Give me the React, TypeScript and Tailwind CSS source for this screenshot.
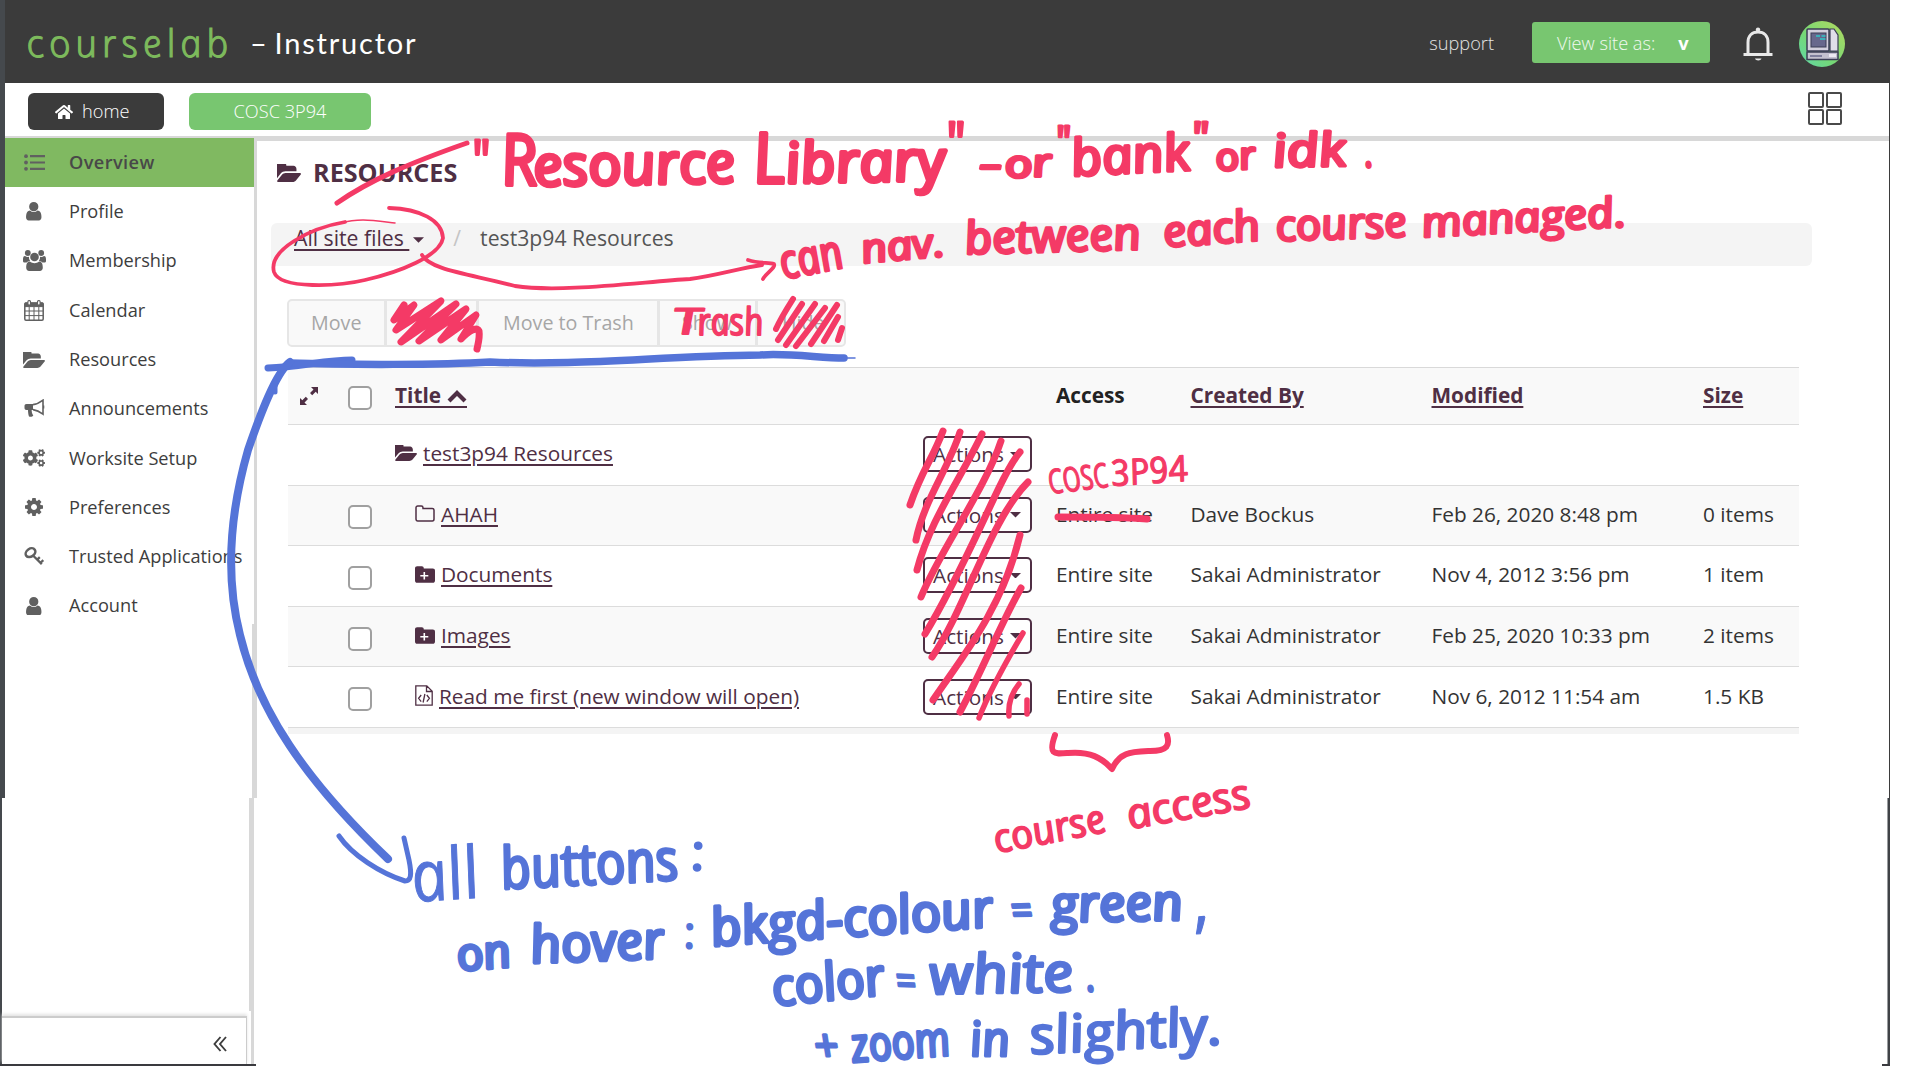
import React from "react";
import { FaCogs, FaHome } from "react-icons/fa";

const USER =
  "M1536 1399q0 109-62.5 187t-150.5 78h-854q-88 0-150.5-78t-62.5-187q0-85 8.5-160.5t31.5-152 58.5-131 94-89 134.5-34.5q131 128 313 128t313-128q76 0 134.5 34.5t94 89 58.5 131 31.5 152 8.5 160.5zm-256-887q0 159-112.5 271.5t-271.5 112.5-271.5-112.5-112.5-271.5 112.5-271.5 271.5-112.5 271.5 112.5 112.5 271.5z";
const FOLDER_OPEN =
  "M1815 952q0 31-31 66l-336 396q-43 51-120.5 86.5t-143.5 35.5h-1088q-34 0-60.5-13t-26.5-43q0-31 31-66l336-396q43-51 120.5-86.5t143.5-35.5h1088q34 0 60.5 13t26.5 43zm-343-344v160h-832q-94 0-197 47.5t-164 119.5l-337 396-5 6q0-4-.5-12.5t-.5-12.5v-960q0-92 66-158t158-66h320q92 0 158 66t66 158v32h544q92 0 158 66t66 158z";
const COG =
  "M1152 896q0-106-75-181t-181-75-181 75-75 181 75 181 181 75 181-75 75-181zm512-109v222q0 12-8 23t-20 13l-185 28q-19 54-39 91 35 50 107 138 10 12 10 25t-9 23q-27 37-99 108t-94 71q-12 0-26-9l-138-108q-44 23-91 38-16 136-29 186-7 28-36 28h-222q-14 0-24.5-8.5t-11.5-21.5l-28-184q-49-16-90-37l-141 107q-10 9-25 9-14 0-25-11-126-114-165-168-7-10-7-23 0-12 8-23 15-21 51-66.5t54-70.5q-27-50-41-99l-183-27q-13-2-21-12.5t-8-23.5v-222q0-12 8-23t19-13l186-28q14-46 39-92-40-57-107-138-10-12-10-24 0-10 9-23 26-36 98.5-107.5t94.5-71.5q13 0 26 10l138 107q44-23 91-38 16-136 29-186 7-28 36-28h222q14 0 24.5 8.5t11.5 21.5l28 184q49 16 90 37l142-107q9-9 24-9 13 0 25 10 129 119 165 170 7 8 7 22 0 12-8 23-15 21-51 66.5t-54 70.5q26 50 41 98l183 28q13 2 21 12.5t8 23.5z";

const UserIcon = () => (
  <svg viewBox="256 128 1280 1536" className="h-[18.5px] w-[15.5px]" fill="currentColor"><path d={USER} /></svg>
);
const UsersIcon = () => (
  <svg viewBox="0 0 23 21" className="h-[21px] w-[23px]" fill="currentColor">
    <circle cx="4.800" cy="3" r="2.900" /><circle cx="18.200" cy="3" r="2.900" />
    <path d="M0 11V9.300C0 7.200.6 6 2 6c.8.6 1.800.9 2.800.9l1.200-.2C5.800 8.200 6.300 9.600 7.200 11c-1.400 0-2.600.5-3.500 1.500H1.800C.7 12.500 0 12 0 11zM23 11V9.300C23 7.200 22.400 6 21 6c-.8.6-1.800.9-2.800.9l-1.200-.2c.2 1.500-.3 2.900-1.200 4.300 1.400 0 2.600.5 3.500 1.500h1.900c1.100 0 1.800-.5 1.800-1.500z" />
    <circle cx="11.500" cy="7" r="4.300" />
    <path d="M3.200 17.800c0-4 1-6.300 3.700-6.300 1.400 1.200 2.900 1.700 4.600 1.700s3.200-.5 4.600-1.700c2.700 0 3.700 2.300 3.700 6.300 0 2-1.200 3.100-3 3.100H6.200c-1.800 0-3-1.100-3-3.100z" />
  </svg>
);
const FolderOpen = ({ className }: { className: string }) => (
  <svg viewBox="0 256 1815 1280" preserveAspectRatio="none" className={className} fill="currentColor"><path d={FOLDER_OPEN} /></svg>
);
const CogIcon = () => (
  <svg viewBox="128 128 1536 1536" className="size-[18px]" fill="currentColor"><path d={COG} /></svg>
);
const ListIcon = () => (
  <svg viewBox="0 0 21 17" className="h-[17px] w-[21px]" fill="currentColor">
    <circle cx="2" cy="2.2" r="1.9" /><circle cx="2" cy="8.5" r="1.9" /><circle cx="2" cy="14.8" r="1.9" />
    <path d="M6 1h15v2.2H6zM6 7.4h15v2.2H6zM6 13.8h15V16H6z" />
  </svg>
);
const CalendarIcon = () => (
  <svg viewBox="0 0 20 21" className="h-[21px] w-5" fill="none" stroke="currentColor">
    <rect x="0.8" y="3" width="18.4" height="17.2" rx="1.2" strokeWidth="1.5" />
    <path d="M1 3h18v3.6H1z" fill="currentColor" />
    <path d="M5.2 7v13M10 7v13M14.8 7v13M1 11h18M1 15.6h18" strokeWidth="1" />
    <rect x="3.9" y="0.6" width="2.6" height="4.4" rx="1" fill="#fff" strokeWidth="1.1" />
    <rect x="13.5" y="0.6" width="2.6" height="4.4" rx="1" fill="#fff" strokeWidth="1.1" />
  </svg>
);
const HornIcon = () => (
  <svg viewBox="0 0 21 19" className="h-[19px] w-[21px]" fill="none" stroke="currentColor">
    <path d="M2.5 5h6.5v6H7.6c.3 2 .2 3.500 1.700 5.400-.8 1.500-3 1.600-4.300 1C4.300 15.500 4 13 4 11H2.500C1.200 11 .5 10.300.5 9V7c0-1.300.7-2 2-2z" fill="currentColor" stroke="none" />
    <path d="M9 5.600c4-.4 7-2.200 10-4.500v14c-3-2.300-6-4-10-4.500M19.500 6.500v3" strokeWidth="1.600" />
  </svg>
);
const KeyIcon = () => (
  <svg viewBox="0 0 21 19" className="h-[19px] w-[21px]" fill="none" stroke="currentColor">
    <ellipse cx="6.500" cy="5.700" rx="5.200" ry="3.900" transform="rotate(-35 6.500 5.700)" strokeWidth="2.500" />
    <path d="M9 8.500l8.800 8.600M13 12.800l2.800-2.700M16.300 16l3-2.900" strokeWidth="2.300" />
  </svg>
);
const Caret = ({ className }: { className: string }) => (
  <svg viewBox="0 0 12 6" className={className} fill="currentColor"><path d="M0 0h12L6 6z" /></svg>
);
const FolderIcon = () => (
  <svg viewBox="0 0 20 17" className="h-[17px] w-5 shrink-0" fill="none" stroke="currentColor" strokeWidth="1.500">
    <path d="M1 14V2.800C1 1.600 1.800 1 2.700 1h3.600c1 0 1.700.6 1.700 1.700V3.600h9.300c1 0 1.700.7 1.700 1.700V14c0 1.200-.8 2-1.700 2H2.700C1.700 16 1 15.200 1 14z" />
  </svg>
);
const FolderPlus = () => (
  <svg viewBox="0 0 20 17" className="h-[17px] w-5 shrink-0">
    <path d="M0 14.500V2.500C0 1 .9.200 2.200.2h4.600C8 .2 8.800 1 8.800 2.500h9C19.200 2.500 20 3.400 20 4.700v9.800c0 1.400-.9 2.300-2.200 2.300H2.200C.9 16.800 0 16 0 14.500z" fill="currentColor" />
    <path d="M9.300 6v7.600M5.300 9.800h8" stroke="#fff" strokeWidth="1.600" />
  </svg>
);
const CodeFile = () => (
  <svg viewBox="0 0 18 21" className="h-[21px] w-[18px] shrink-0" fill="none" stroke="currentColor" strokeWidth="1.300">
    <path d="M.8.800h11l5.400 5.500v13.900H.8zM11.500.800v5.700h5.700M6.200 10l-2.600 3.300 2.600 3.300M11.800 10l2.600 3.300-2.600 3.300M9.900 9l-1.800 8.500" />
  </svg>
);

const nav: [React.ReactNode, string][] = [
  [<ListIcon />, "Overview"],
  [<UserIcon />, "Profile"],
  [<UsersIcon />, "Membership"],
  [<CalendarIcon />, "Calendar"],
  [<FolderOpen className="h-4 w-[22px]" />, "Resources"],
  [<HornIcon />, "Announcements"],
  [<FaCogs className="size-[22px]" />, "Worksite Setup"],
  [<CogIcon />, "Preferences"],
  [<KeyIcon />, "Trusted Applications"],
  [<UserIcon />, "Account"],
];

function TopBar() {
  return (
    <header className="flex h-[83px] items-center bg-[#3b3b3b] pt-px pr-[44px] pl-[22px]">
      <h1 className="flex items-baseline font-['Open_Sans'] font-light">
        <span className="mt-[3px] ml-[4px] block w-[219px] origin-bottom-left skew-x-12 text-[38px] leading-[50px] tracking-[5.100px] text-[#7dba5c] italic [-webkit-text-stroke:1.200px_#7dba5c]">courselab</span>
        <span className="-translate-y-[3px] font-['Lato'] text-[29px] leading-[50px] font-normal tracking-[1.700px] text-white">–</span>
        <span className="-translate-y-[3px] pl-[6px] font-['Lato'] text-[29px] leading-[50px] font-normal tracking-[1.800px] text-white">Instructor</span>
      </h1>
      <span className="mt-[4px] ml-auto text-[18.2px] font-light text-[#e4e4e4]">support</span>
      <button className="mt-px ml-[38px] flex h-[41px] w-[178px] items-center rounded-[3px] bg-[#78c670] pt-[3px] pl-[25px] text-[18.2px] font-light text-white/90">
        View site as:<b className="ml-[23px] font-bold text-white">v</b>
      </button>
      <svg viewBox="0 0 30 35" className="mt-1 ml-[33px] h-[35px] w-[30px]" fill="none" stroke="#e8e8e8" strokeWidth="3">
        <path d="M5 27.500V15.500C5 9 9 5 15 5s10 4 10 10.500v12M15 5V2" />
        <path d="M.5 27.500h29" strokeWidth="3" /><path d="M12 31.500h6.500c-.5 2.600-6 2.600-6.500 0z" fill="#e8e8e8" stroke="none" /><circle cx="15" cy="2.600" r="2.200" fill="#e8e8e8" stroke="none" />
      </svg>
      <svg viewBox="0 0 46 46" className="mt-1 ml-[26px] size-[46px]">
        <defs><linearGradient id="av" x1="1" y1="0" x2="0" y2="1"><stop offset="0" stopColor="#b4da5f" /><stop offset=".6" stopColor="#74d877" /><stop offset="1" stopColor="#5fd6ac" /></linearGradient></defs>
        <circle cx="23" cy="23" r="23" fill="url(#av)" />
        <path d="M31 8h4l4 6v16h-8z" fill="#e0deea" stroke="#3b3d55" strokeWidth="1.200" />
        <rect x="8" y="8" width="22" height="22" rx="1" fill="#d2d0dd" stroke="#3b3d55" strokeWidth="1.500" />
        <rect x="12" y="12" width="15" height="14" fill="#67688c" stroke="#3b3d55" />
        <path d="M17 15h4M22.500 15h4M21 18h5.500" stroke="#2fc6c8" strokeWidth="1.500" />
        <rect x="8" y="31" width="31" height="7.500" fill="#c3c1cf" stroke="#3b3d55" strokeWidth="1.500" />
        <path d="M11 35h12" stroke="#67688c" strokeWidth="1.500" /><path d="M30 33h7v3h-7z" fill="#eceaf2" />
      </svg>
    </header>
  );
}

function SiteBar() {
  return (
    <nav className="flex h-[58px] items-center border-b-[5px] border-[#d8d8d8] bg-white pt-[4px] pr-[47px] pl-[23px] text-[18.2px] font-light text-white">
      <a className="flex h-[37px] w-[136px] items-center rounded-[6px] bg-[#3b3b3b] pl-[27px]"><FaHome className="mr-[9px] size-[18px]" />home</a>
      <a className="ml-[25px] flex h-[37px] w-[182px] items-center justify-center rounded-[6px] bg-[#78c670]">COSC 3P94</a>
      <span className="-mt-[6px] ml-auto grid grid-cols-2 gap-x-[2px] gap-y-[1px]">
        <i className="size-[16px] rounded-[2px] border-2 border-[#4a4a4a]" /><i className="size-[16px] rounded-[2px] border-2 border-[#4a4a4a]" />
        <i className="size-[16px] rounded-[2px] border-2 border-[#4a4a4a]" /><i className="size-[16px] rounded-[2px] border-2 border-[#4a4a4a]" />
      </span>
    </nav>
  );
}

function Sidebar() {
  return (
    <aside className="flex w-[257px] shrink-0 flex-col">
      <div className="flex h-[657px] border-l-[5px] border-[#45494d]">
        <ul className="relative -mt-[3px] w-[249px] shrink-0 text-[18.2px] text-[#3d3d3d]">
          {nav.map(([icon, label], i) => (
            <li key={label} className={i === 0 ? "flex h-[49.300px] items-center bg-[#80b961] font-semibold tracking-[.4px] text-[#484848]" : "flex h-[49.300px] items-center pb-[.5px]"}>
              <span className="flex w-[58px] shrink-0 justify-center text-[#606060]">{icon}</span>
              <span className="ml-[6px] whitespace-nowrap">{label}</span>
            </li>
          ))}
        </ul>
        <div className="-ml-[2px] flex w-[5px] shrink-0 flex-col items-end">
          <i className="h-[483px] w-[3px] bg-[#d8d8d8]" />
          <i className="w-[5px] flex-1 bg-[#d8d8d8]" />
        </div>
      </div>
      <div className="flex h-[213px] border-l-2 border-[#45494d]">
        <div className="w-[247px] shrink-0" />
        <i className="w-[5px] bg-[#d8d8d8]" />
      </div>
      <div className="flex h-[53px] border-l-2 border-[#45494d]">
        <div className="mt-[5px] flex w-[245px] items-center justify-end border-t-2 border-r border-[#ccc] pr-[19px] shadow-[0_-2px_3px_#e4e4e4]">
          <svg viewBox="0 0 14 16" className="mt-[5px] h-4 w-[14px]" fill="none" stroke="#3d3d3d" strokeWidth="1.900"><path d="M7.500 1L1.500 8l6 7M13 1L7 8l6 7" /></svg>
        </div>
        <i className="ml-[4px] w-[3px] bg-[#d8d8d8]" />
      </div>
      <div className="h-[2px] w-[256px] bg-[#3a3a3f]" />
    </aside>
  );
}

type Row = { icon: React.ReactNode; name: string; root?: boolean; meta?: [string, string, string, string] };
const rows: Row[] = [
  { icon: <FolderOpen className="mr-[6px] h-4 w-[22px]" />, name: "test3p94 Resources", root: true },
  { icon: <FolderIcon />, name: "AHAH", meta: ["Entire site", "Dave Bockus", "Feb 26, 2020 8:48 pm", "0 items"] },
  { icon: <FolderPlus />, name: "Documents", meta: ["Entire site", "Sakai Administrator", "Nov 4, 2012 3:56 pm", "1 item"] },
  { icon: <FolderPlus />, name: "Images", meta: ["Entire site", "Sakai Administrator", "Feb 25, 2020 10:33 pm", "2 items"] },
  { icon: <CodeFile />, name: "Read me first (new window will open)", meta: ["Entire site", "Sakai Administrator", "Nov 6, 2012 11:54 am", "1.5 KB"] },
];

const Check = () => <span className="size-6 rounded-[5px] border-2 border-[#a0a0a0] bg-white" />;

function FileTable() {
  return (
    <section className="mt-[20px] ml-[31px] w-[1511px] text-[20.8px] leading-7 text-[#333]">
      <div className="grid h-[57px] grid-cols-[59.500px_47.500px_528px_133px_134.500px_241px_271.500px_1fr] items-center border-t border-[#d9d9d9] bg-[#f9f9f9] font-bold text-[#4f2f44]">
        <svg viewBox="0 0 18 18" className="ml-3 size-[18px]" fill="#4f2f44"><path d="M11 0h7v7l-2.300-2.300-3.500 3.500-2.200-2.200 3.500-3.500zM0 11l2.300 2.300 3.500-3.500L8 12l-3.500 3.500L7 18H0z" /></svg>
        <span className="mt-1 flex"><Check /></span>
        <span className="flex items-center pb-px"><a className="flex items-center border-b-2 border-[#4f2f44] leading-[22px]">Title
          <svg viewBox="0 0 20 13" className="mt-[3px] ml-[6px] h-[13px] w-5" fill="none" stroke="currentColor" strokeWidth="4.200"><path d="M2 11l8-8 8 8" /></svg></a></span>
        <span />
        <span className="pb-[2px] text-[#222]">Access</span>
        <span className="pb-[2px] underline decoration-2 underline-offset-[3px]">Created By</span>
        <span className="pb-[2px] underline decoration-2 underline-offset-[3px]">Modified</span>
        <span className="pb-[2px] underline decoration-2 underline-offset-[3px]">Size</span>
      </div>
      {rows.map((r, i) => (
        <div key={r.name} className={i % 2 ? "grid h-[60.600px] grid-cols-[59.500px_47.500px_528px_133px_134.500px_241px_271.500px_1fr] items-center border-t border-[#dcdcdc] bg-[#f9f9f9]" : "grid h-[60.600px] grid-cols-[59.500px_47.500px_528px_133px_134.500px_241px_271.500px_1fr] items-center border-t border-[#dcdcdc] bg-white"}>
          <span />
          <span className="mt-1 flex">{r.meta && <Check />}</span>
          <span className={r.root ? "flex items-center pb-[3px] text-[#4f2f44]" : "flex items-center gap-[6px] pb-[3px] pl-5 text-[#4f2f44]"}>
            {r.icon}
            <a className="underline decoration-2 underline-offset-[3px]">{r.name}</a>
          </span>
          <button className="-mt-px flex h-9 w-[109px] items-center rounded-[5px] border-2 border-[#4f2f44] bg-white pl-[8px] text-[#4f2f44]">Actions<Caret className="ml-[6px] h-[5.500px] w-[11px]" /></button>
          {r.meta && r.meta.map((m, j) => <span key={j} className="pb-[3px] whitespace-nowrap">{m}</span>)}
        </div>
      ))}
      <div className="h-[7px] border-t border-[#dcdcdc] bg-[#f4f4f4]" />
    </section>
  );
}

function Content() {
  return (
    <main className="flex w-[1625px] flex-col text-[#4f2f44]">
      <h2 className="mt-[15px] ml-[20px] flex h-[34px] items-center text-[25.200px] font-bold"><FolderOpen className="mr-[12px] h-[18px] w-6" />RESOURCES</h2>
      <div className="mt-[33px] ml-[14px] flex h-[43px] w-[1541px] items-start rounded-[6px] bg-[#f4f4f4] pl-[23px] text-[21.200px] leading-[30px]">
        <a className="flex items-center"><span className="underline decoration-2 underline-offset-[3px]">All site files&nbsp;</span><Caret className="mt-[3px] ml-[4px] h-[6px] w-[11px]" /></a>
        <span className="ml-[29px] text-[#c4c4c4]">/</span>
        <span className="ml-[19px] text-[#555]">test3p94 Resources</span>
      </div>
      <div className="mt-[33px] ml-[30px] flex h-[48px] w-[559px] rounded-[5px] border-2 border-[#e6e6e6] bg-[#f9f9f9] text-[19.700px] leading-[44px] text-[#a6a6a6]">
        <span className="w-[98px] border-r-[3px] border-[#e6e6e6] pl-[22px]">Move</span>
        <span className="w-[92px] border-r-[3px] border-[#e6e6e6]" />
        <span className="w-[181px] border-r-[3px] border-[#e6e6e6] pl-[24px]">Move to Trash</span>
        <span className="w-[98px] border-r-[3px] border-[#e6e6e6] pl-[22px]">Show</span>
        <span className="pl-[24px]">Hide</span>
      </div>
      <FileTable />
    </main>
  );
}

/* Marker note: [text, x, baseline, width, font size, rotation, outline] */
type Word = [string, number, number, number, number, number, number];
const redWords: Word[] = [
  ["\"", 475, 180, 18, 56, 0, 3],
  ["R", 504, 185, 36, 71, 0, 4],
  ["esource", 536, 186, 202, 57, -1, 4],
  ["L", 756, 183, 32, 70, 0, 4],
  ["ibrary", 788, 183, 160, 56, -1, 4],
  ["\"", 949, 162, 19, 56, 0, 3],
  ["-", 981, 179, 23, 44, 0, 3],
  ["or", 1007, 178, 47, 38, -3, 3.400],
  ["\"", 1058, 156, 15, 42, 0, 3],
  ["bank", 1074, 176, 119, 51, -3, 3.400],
  ["\"", 1194, 152, 17, 42, 0, 3],
  ["or", 1218, 171, 40, 38, -4, 3.400],
  ["idk", 1275, 167, 73, 46, -1, 3.400],
  [".", 1366, 167, 9, 44, 0, 2.8],
  ["can", 785, 279, 63, 48, -11, 3],
  ["nav.", 864, 263, 83, 40, -5, 3],
  ["between", 967, 254, 176, 45, -1.5, 3],
  ["each", 1166, 247, 97, 43, -4, 3],
  ["course", 1278, 241, 131, 43, -2, 3],
  ["managed.", 1424, 237, 204, 41, -3, 3],
  ["T", 674, 334, 29, 36, 0, 1.800],
  ["rash", 699, 335, 66, 38, 0, 1.800],
  ["COSC", 1051, 494, 60, 34, -7, 1.200],
  ["3P94", 1113, 486, 77, 36, -4, 1.200],
  ["course", 998, 853, 113, 40, -11, 1.800],
  ["access", 1131, 829, 125, 42, -10, 1.800],
];
const blueWords: Word[] = [
  ["all", 416, 902, 68, 72, -4, 1],
  ["buttons", 504, 889, 178, 58, -3, 3],
  [":", 693, 870, 14, 50, 0, 2],
  ["on", 460, 971, 54, 46, -5, 3.600],
  ["hover", 533, 963, 134, 52, -2, 3.600],
  [":", 686, 948, 11, 44, 0, 2],
  ["bkgd-colour", 714, 946, 283, 52, -4, 3.600],
  ["=", 1013, 925, 21, 42, -1, 3],
  ["green", 1053, 922, 132, 50, -1, 3.600],
  [",", 1197, 925, 16, 70, -4, 1],
  ["color", 776, 1006, 113, 52, -6, 3.600],
  ["=", 897, 995, 20, 42, 2, 2.600],
  ["white", 932, 994, 144, 54, -1, 3],
  [".", 1088, 991, 9, 44, 0, 3],
  ["+", 816, 1061, 24, 44, 0, 3],
  ["zoom", 854, 1062, 99, 48, -4, 3.400],
  ["in", 972, 1056, 40, 48, 0, 3],
  ["slightly.", 1033, 1054, 192, 52, -3, 2.600],
];

const Ink = ({ words, color }: { words: Word[]; color: string }) => (
  <g fill={color} stroke={color} strokeLinejoin="round" strokeLinecap="round" fontStyle="italic" fontFamily="Open Sans, sans-serif">
    {words.map(([t, x, y, w, s, r, o], i) => (
      <text key={i} transform={`translate(${x} ${y}) rotate(${r}) skewX(9)`} fontSize={s} strokeWidth={o} textLength={w} lengthAdjust="spacingAndGlyphs">{t}</text>
    ))}
  </g>
);

function Annotations() {
  return (
    <svg viewBox="0 0 1920 1080" className="pointer-events-none absolute inset-0 size-full">
      <g fill="none" stroke="#f43a66" strokeLinecap="round" strokeLinejoin="round">
        <path d="M337 203C370 180 410 163 467 143" strokeWidth="5" />
        <path d="M395 223C370 220 360 218 340 223" strokeWidth="1.500" />
        <path d="M345 222C310 228 268 250 274 272C280 290 340 286 365 280C400 272 440 256 443 238C442 220 420 209 389 208" strokeWidth="3.800" />
        <path d="M422 255C430 270 470 274 515 286C560 293 640 282 690 279C715 276 740 268 762 265M748 260C760 264 769 262 774 264C776 268 766 273 763 279" strokeWidth="3.800" />
        <path d="M404 305L394 320L414 305L396 330L441 301L401 342L456 304L419 341L466 309L441 340L476 315L461 339C468 332 476 326 479 331C480 338 478 344 477 349" strokeWidth="7" />
        <path d="M793 299C786 310 780 320 776 329M802 304L778 340M815 304L786 345M825 308L796 346M837 305L811 344M838 317L824 341M842 328L838 340" strokeWidth="6" />
        <g strokeWidth="7">
          <path d="M943 431C932 460 922 470 910 505M960 432C948 470 924 500 916 540M982 434C960 480 930 520 917 570M1001 441C985 490 940 550 921 597M1020 452C1000 475 970 560 925 634M1028 482C990 520 965 610 932 657M1020 535C1002 610 960 660 933 700M1021 588C1000 625 985 665 960 712" />
        </g>
        <path d="M1023 633C1010 655 990 690 979 718M1019 684C1010 695 1008 705 1009 716M1027 700V714" strokeWidth="5.500" />
        <path d="M1058 517C1090 517 1120 517 1147 519" strokeWidth="7" />
        <path d="M1055 735C1048 755 1054 754 1068 753C1090 751 1102 758 1112 769C1120 752 1130 752 1150 751C1168 751 1170 745 1167 735" strokeWidth="6" />
      </g>
      <g fill="none" stroke="#5574d8" strokeLinecap="round" strokeLinejoin="round">
        <path d="M268 368C300 367 325 360 352 360" strokeWidth="7" />
        <path d="M289 363C350 365 440 365 490 362C580 366 660 356 760 355C790 353 820 358 844 358" strokeWidth="7.500" />
        <path d="M842 358H855" strokeWidth="1.500" />
        <path d="M290 362C276 372 260 415 248 450C228 520 226 580 240 635C258 710 305 780 388 859" strokeWidth="8" />
        <path d="M275 392V381" strokeWidth="5" />
        <path d="M339 836C352 855 380 873 405 881C411 881 412 875 409 860L404 838" strokeWidth="5" />
      </g>
      <Ink words={redWords} color="#f43a66" />
      <Ink words={blueWords} color="#5574d8" />
    </svg>
  );
}

export default function App() {
  return (
    <div className="relative flex h-[1080px] w-[1920px] flex-col overflow-hidden bg-white font-['Open_Sans',sans-serif]">
      <div className="w-[1890px] border-r border-l-[5px] border-r-[#3b3b3b] border-l-[#45494d]">
        <TopBar />
        <SiteBar />
      </div>
      <div className="flex flex-1">
        <Sidebar />
        <Content />
        <div className="flex w-[8px] flex-col items-end">
          <i className="h-[657px] w-px bg-[#3b3b3b]" />
          <i className="h-[266px] w-[3px] border-l border-[#9a9da0] bg-[#3f4246]" />
          <i className="h-[2px] w-[8px] bg-[#3a3a3f]" />
        </div>
      </div>
      <Annotations />
    </div>
  );
}
